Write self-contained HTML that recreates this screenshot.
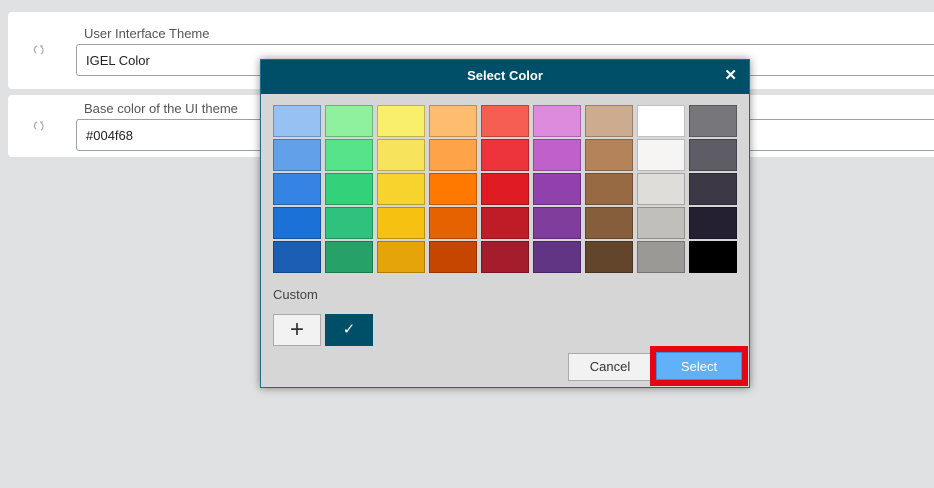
<!DOCTYPE html>
<html><head><style>
*{box-sizing:border-box;margin:0;padding:0}
body{width:934px;height:488px;background:#dfe1e3;font-family:"Liberation Sans",sans-serif;position:relative;overflow:hidden}
.card{position:absolute;left:8px;width:940px;background:#fff;border-radius:4px}
.lbl{position:absolute;left:84px;font-size:13px;color:#555}
.inp{position:absolute;left:68px;width:900px;height:32px;border:1px solid #9aa0a6;border-radius:3px;font-size:13px;color:#222;padding:8px 9px}
.ic{position:absolute;left:26px}
.dlg{position:absolute;left:260px;top:59px;width:490px;height:329px;background:#d6d6d6;border:1px solid #1f6c85;box-shadow:0 0 8px rgba(0,0,0,.45)}
.hd{height:34px;background:#004f68;color:#fff;font-weight:bold;font-size:13px;text-align:center;line-height:32px;position:relative}
.x{position:absolute;right:12px;top:0;font-size:15px}
.sw{position:absolute;width:48px;height:32px;border:1px solid rgba(0,0,0,.25)}
.btn{position:absolute;font-size:13px;text-align:center}
</style></head><body>
<div class="card" style="top:12px;height:77px"></div>
<div class="lbl" style="top:26px">User Interface Theme</div>
<div class="inp" style="left:76px;top:44px">IGEL Color</div>
<div class="card" style="top:95px;height:62px"></div>
<div class="lbl" style="top:101px">Base color of the UI theme</div>
<div class="inp" style="left:76px;top:119px">#004f68</div>
<svg class="ic" style="left:33px;top:44px" width="12" height="12" viewBox="0 0 12 12" fill="none" stroke="#aaa" stroke-width="1.2"><path d="M4 2 A4 4 0 0 0 3 9"/><path d="M8 3 A4 4 0 0 1 8 10"/><path d="M7 2 h3"/></svg>
<svg class="ic" style="left:33px;top:120px" width="12" height="12" viewBox="0 0 12 12" fill="none" stroke="#aaa" stroke-width="1.2"><path d="M4 2 A4 4 0 0 0 3 9"/><path d="M8 3 A4 4 0 0 1 8 10"/><path d="M7 2 h3"/></svg>
<div class="dlg">
<div class="hd">Select Color<span class="x">✕</span></div>
<div id="g"></div>
<div style="position:absolute;left:12px;top:227px;font-size:13px;color:#444">Custom</div>
<div class="btn" style="left:12px;top:254px;width:48px;height:32px;background:#f2f2f2;border:1px solid #aaa;font-size:24px;line-height:30px;color:#333">+</div>
<div class="btn" style="left:64px;top:254px;width:48px;height:32px;background:#004f68;color:#fff;font-size:15px;line-height:32px">✓</div>
<div class="btn" style="left:307px;top:293px;width:84px;height:28px;background:#f2f2f2;border:1px solid #aaa;line-height:26px;color:#333">Cancel</div>
<div style="position:absolute;left:389px;top:286px;width:98px;height:40px;background:#e30613"></div>
<div class="btn" style="left:395px;top:292px;width:86px;height:28px;background:#62b0f8;border:1px solid #3c8fe0;line-height:27px;color:#fff">Select</div>
</div>
<script>
var c=[["#98c1f3","#8ff09e","#f9ef6b","#fdbc6e","#f65e52","#dc8bdd","#cdab8f","#ffffff","#77767b"],
["#62a0ea","#57e389","#f8e45c","#ffa348","#ed333b","#c061cb","#b5835a","#f6f5f4","#5e5c64"],
["#3584e4","#33d17a","#f6d32d","#ff7800","#e01b24","#9141ac","#986a44","#deddda","#3d3846"],
["#1c71d8","#2ec27e","#f5c211","#e66100","#c01c28","#813d9c","#865e3c","#c0bfbc","#241f31"],
["#1a5fb4","#26a269","#e5a50a","#c64600","#a51d2d","#613583","#63452c","#9a9996","#000000"]];
var h="";for(var r=0;r<5;r++)for(var k=0;k<9;k++)h+='<div class="sw" style="left:'+(12+k*52)+'px;top:'+(45+r*34)+'px;background:'+c[r][k]+'"></div>';
document.getElementById("g").innerHTML=h;
</script>
</body></html>
